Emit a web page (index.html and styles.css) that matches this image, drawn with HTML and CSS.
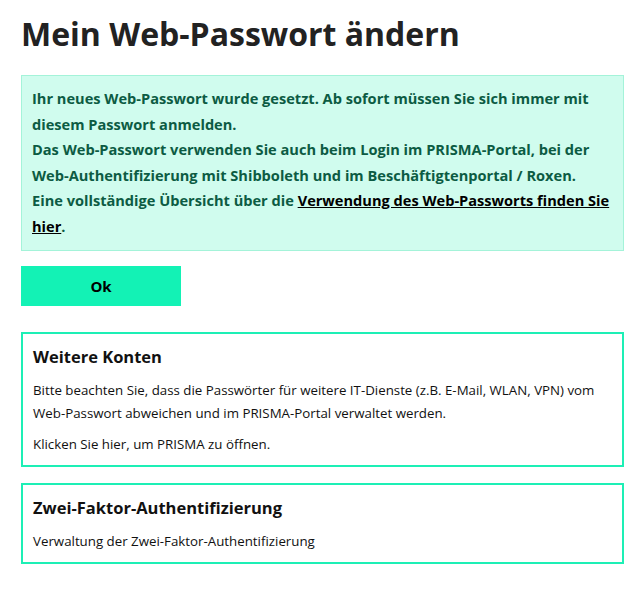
FILE: index.html
```html
<!DOCTYPE html>
<html lang="de">
<head>
    <meta charset="UTF-8">
    <meta name="viewport" content="width=device-width, initial-scale=1.0">
    <title>Mein Web-Passwort ändern</title>
    <link rel="stylesheet" href="styles.css">
</head>
<body>
    <main class="page">
        <h1 class="page-title">Mein Web-Passwort ändern</h1>

        <!-- Erfolgsmeldung -->
        <div class="alert-success">
            Ihr neues Web-Passwort wurde gesetzt. Ab sofort müssen Sie sich immer mit diesem Passwort anmelden.<br>
            Das Web-Passwort verwenden Sie auch beim Login im PRISMA-Portal, bei der Web-Authentifizierung mit Shibboleth und im Beschäftigtenportal / Roxen.<br>
            Eine vollständige Übersicht über die <a href="#">Verwendung des Web-Passworts finden Sie hier</a>.
        </div>

        <button class="btn-ok">Ok</button>

        <!-- Weitere Hinweise -->
        <section class="card">
            <h3>Weitere Konten</h3>
            <p>Bitte beachten Sie, dass die Passwörter für weitere IT-Dienste (z.B. E-Mail, WLAN, VPN) vom Web-Passwort abweichen und im PRISMA-Portal verwaltet werden.</p>
            <p>Klicken Sie hier, um PRISMA zu öffnen.</p>
        </section>

        <section class="card">
            <h3>Zwei-Faktor-Authentifizierung</h3>
            <p>Verwaltung der Zwei-Faktor-Authentifizierung</p>
        </section>
    </main>
</body>
</html>
```

FILE: styles.css
```css
body {
    font-family: "Open Sans", "Noto Sans", sans-serif;
    margin: 0;
    padding: 0;
    color: #111;
    background: #fff;
}
.page {
    padding: 14px 20px 20px 21px;
}
.page-title {
    font-size: 32px;
    font-weight: 700;
    color: #222;
    margin: 0 0 21px;
    line-height: 40px;
}
.alert-success {
    background: #d0fcee;
    border: 1px solid #a4f3d9;
    color: #0c5b43;
    font-size: 14.6px;
    font-weight: 700;
    line-height: 25.5px;
    padding: 10px 10px 11px;
}
.alert-success a {
    color: #000;
}
.btn-ok {
    display: block;
    width: 160px;
    height: 40px;
    margin: 15px 0 26px;
    border: 0;
    background: #13f2b5;
    font-family: inherit;
    font-size: 15px;
    font-weight: 700;
    color: #000;
    cursor: pointer;
}
.card {
    border: 2px solid #1defb5;
    padding: 10px 10px 9px;
    margin-bottom: 16px;
}
.card h3 {
    font-size: 16.5px;
    margin: 1px 0 11px;
}
.card p {
    font-size: 13.3px;
    line-height: 23px;
    margin: 0 0 8px;
}
.card p:last-child {
    margin-bottom: 0;
}
```
